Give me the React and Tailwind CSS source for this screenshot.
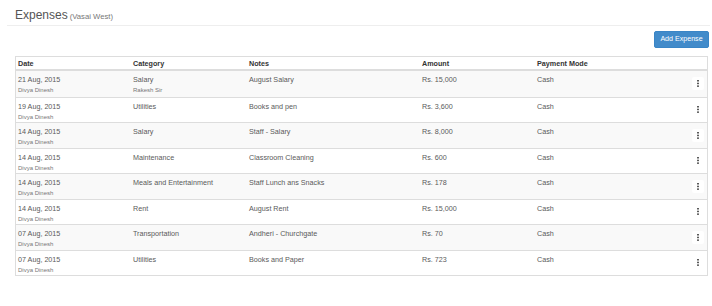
import React from "react";

const rows = [
  { date: "21 Aug, 2015", cat: "Salary", sub: "Rakesh Sir", notes: "August Salary", amt: "Rs. 15,000" },
  { date: "19 Aug, 2015", cat: "Utilities", notes: "Books and pen", amt: "Rs. 3,600" },
  { date: "14 Aug, 2015", cat: "Salary", notes: "Staff - Salary", amt: "Rs. 8,000" },
  { date: "14 Aug, 2015", cat: "Maintenance", notes: "Classroom Cleaning", amt: "Rs. 600" },
  { date: "14 Aug, 2015", cat: "Meals and Entertainment", notes: "Staff Lunch ans Snacks", amt: "Rs. 178" },
  { date: "14 Aug, 2015", cat: "Rent", notes: "August Rent", amt: "Rs. 15,000" },
  { date: "07 Aug, 2015", cat: "Transportation", notes: "Andheri - Churchgate", amt: "Rs. 70" },
  { date: "07 Aug, 2015", cat: "Utilities", notes: "Books and Paper", amt: "Rs. 723" },
];

function Kebab() {
  return (
    <div className="w-[12px] h-[13px] bg-white rounded-[2px] flex items-center justify-center">
      <svg width="2" height="7" viewBox="0 0 2 7">
        <rect x="0.2" y="0" width="1.6" height="1.5" fill="#333" />
        <rect x="0.2" y="2.7" width="1.6" height="1.5" fill="#333" />
        <rect x="0.2" y="5.4" width="1.6" height="1.5" fill="#333" />
      </svg>
    </div>
  );
}

export default function App() {
  return (
    <div className="w-[712px] h-[306px] bg-white text-[#5a5a5a] font-['Liberation_Sans',Arial,sans-serif] overflow-hidden">
      <div className="pl-[15px] pt-[7px] leading-[14px] h-[21px] whitespace-nowrap">
        <span className="text-[12px] text-[#555]">Expenses</span>
        <span className="text-[7.7px] text-[#777] ml-[2px]">(Vasai West)</span>
      </div>
      <div className="ml-[7px] mr-[2px] mt-[4px] border-t border-[#eee]" />
      <div className="flex justify-end mt-[5px] mr-[3px]">
        <div className="w-[55px] h-[17px] bg-[#428bca] border border-[#3a85c6] rounded-[2px] text-white text-[7.1px] flex items-center justify-center">
          Add Expense
        </div>
      </div>
      <div className="ml-[15px] mr-[4px] mt-[8px] border border-[#ddd] text-[7.2px] leading-[10px]">
        <div className="flex h-[14px] pt-[2px] border-b-2 border-[#ddd] font-bold text-[#333]">
          <div className="w-[114px] pl-[2px]">Date</div>
          <div className="w-[116px] pl-[3px]">Category</div>
          <div className="w-[173px] pl-[3px]">Notes</div>
          <div className="w-[115px] pl-[3px]">Amount</div>
          <div className="w-[115px] pl-[3px]">Payment Mode</div>
          <div className="flex-1" />
        </div>
        {rows.map((r, i) => (
          <div
            key={i}
            className={`flex h-[25.5px] ${i > 0 ? "border-t border-[#ddd]" : ""} ${i % 2 === 0 ? "bg-[#f9f9f9]" : "bg-white"}`}
          >
            <div className="w-[114px] pl-[2px] pt-[4px]">
              <div>{r.date}</div>
              <div className="mt-[1px] text-[6px] leading-[8px] text-[#777]">Divya Dinesh</div>
            </div>
            <div className="w-[116px] pl-[3px] pt-[4px]">
              <div>{r.cat}</div>
              {r.sub && <div className="mt-[1px] text-[6px] leading-[8px] text-[#777]">{r.sub}</div>}
            </div>
            <div className="w-[173px] pl-[3px] pt-[4px]">{r.notes}</div>
            <div className="w-[115px] pl-[3px] pt-[4px]">{r.amt}</div>
            <div className="w-[115px] pl-[3px] pt-[4px]">Cash</div>
            <div className="flex-1 flex items-center justify-end pr-[3px]">
              <Kebab />
            </div>
          </div>
        ))}
      </div>
    </div>
  );
}
